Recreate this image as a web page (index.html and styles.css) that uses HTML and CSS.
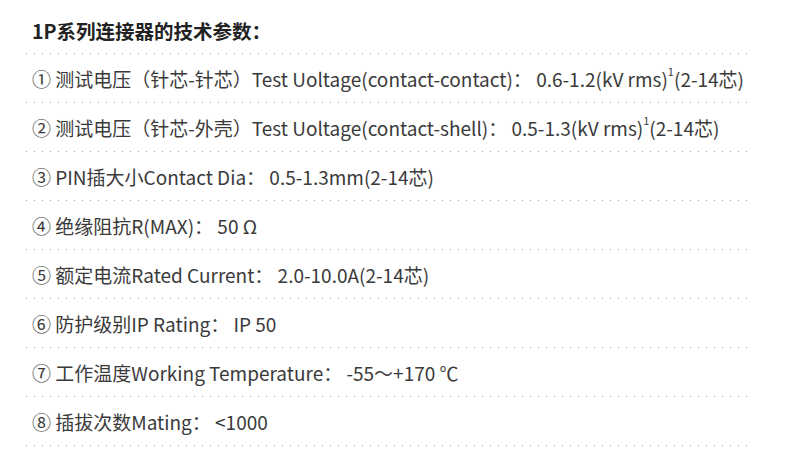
FILE: index.html
```html
<!DOCTYPE html>
<html lang="zh-CN">
<head>
<meta charset="utf-8">
<title>1P系列连接器的技术参数</title>
<link rel="stylesheet" href="styles.css">
</head>
<body>
<div class="spec">
  <h2 class="title">1P系列连接器的技术参数：</h2>
  <ul class="list">
    <li class="row">① 测试电压（针芯-针芯）Test Uoltage(contact-contact)： 0.6-1.2(kV rms)<sup class="sup">1</sup>(2-14芯)</li>
    <li class="row">② 测试电压（针芯-外壳）Test Uoltage(contact-shell)： 0.5-1.3(kV rms)<sup class="sup">1</sup>(2-14芯)</li>
    <li class="row">③ PIN插大小Contact Dia： 0.5-1.3mm(2-14芯)</li>
    <li class="row">④ 绝缘阻抗R(MAX)： 50 Ω</li>
    <li class="row">⑤ 额定电流Rated Current： 2.0-10.0A(2-14芯)</li>
    <li class="row">⑥ 防护级别IP Rating： IP 50</li>
    <li class="row">⑦ 工作温度Working Temperature： -55～+170 ℃</li>
    <li class="row">⑧ 插拔次数Mating： &lt;1000</li>
  </ul>
</div>
</body>
</html>
```
FILE: styles.css
```css
html, body {
  margin: 0;
  padding: 0;
  background: #ffffff;
}
body {
  font-family: "Noto Sans CJK SC", "Noto Sans", sans-serif;
  color: #3a3a3a;
  width: 790px;
  height: 475px;
  overflow: hidden;
}
.spec {
  margin-left: 24px;
  width: 727px;
}
.list {
  list-style: none;
  margin: 0;
  padding: 0;
}
.title,
.row {
  background-image: linear-gradient(to right, #9a9a9a 1px, transparent 1px);
  background-size: 8px 1px;
  background-repeat: repeat-x;
  background-position: 2px 100%;
}
.title {
  margin: 0;
  height: 54px;
  box-sizing: border-box;
  padding: 7px 0 0 8px;
  display: flex;
  align-items: center;
  font-size: 19.5px;
  font-weight: 700;
  color: #222222;
}
.row {
  height: 49px;
  box-sizing: border-box;
  padding: 0 0 1px 8px;
  display: flex;
  align-items: center;
  font-size: 19px;
  white-space: nowrap;
}
.sup {
  font-size: 11px;
  position: relative;
  top: -7px;
  vertical-align: baseline;
  line-height: 0;
}
```
